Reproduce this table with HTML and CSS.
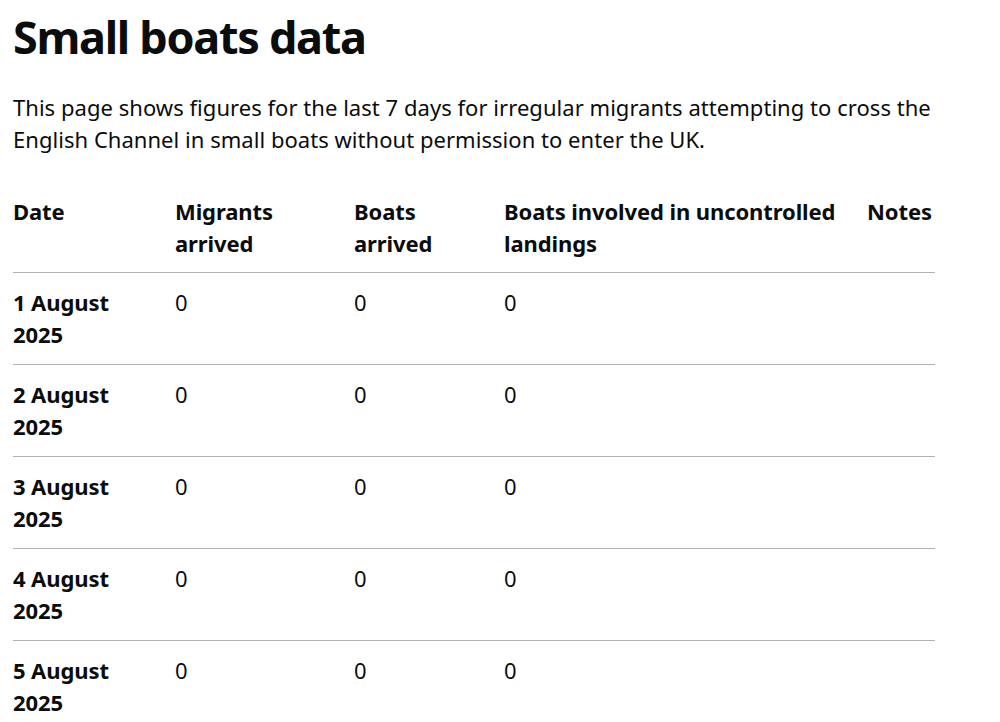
FILE: index.html
```html
<!DOCTYPE html>
<html lang="en">
<head>
<meta charset="utf-8">
<title>Small boats data</title>
<link rel="stylesheet" href="styles.css">
</head>
<body>
<main class="page">
  <h1 class="title">Small boats data</h1>
  <p class="lead">This page shows figures for the last 7 days for irregular migrants attempting to cross the English Channel in small boats without permission to enter the UK.</p>
  <table class="data">
    <colgroup>
      <col class="c-date"><col class="c-mig"><col class="c-boats"><col class="c-unc"><col class="c-notes">
    </colgroup>
    <thead>
      <tr><th>Date</th><th>Migrants arrived</th><th>Boats arrived</th><th>Boats involved in uncontrolled landings</th><th>Notes</th></tr>
    </thead>
    <tbody>
      <tr><th>1 August 2025</th><td>0</td><td>0</td><td>0</td><td></td></tr>
      <tr><th>2 August 2025</th><td>0</td><td>0</td><td>0</td><td></td></tr>
      <tr><th>3 August 2025</th><td>0</td><td>0</td><td>0</td><td></td></tr>
      <tr><th>4 August 2025</th><td>0</td><td>0</td><td>0</td><td></td></tr>
      <tr><th>5 August 2025</th><td>0</td><td>0</td><td>0</td><td></td></tr>
      <tr><th>6 August 2025</th><td>0</td><td>0</td><td>0</td><td></td></tr>
      <tr><th>7 August 2025</th><td>0</td><td>0</td><td>0</td><td></td></tr>
    </tbody>
  </table>
</main>
</body>
</html>
```

FILE: styles.css
```css
html, body {
  margin: 0;
  padding: 0;
  background: #ffffff;
}
body {
  font-family: "Noto Sans", "Liberation Sans", sans-serif;
  color: #0b0c0c;
}
.page {
  padding: 0 13px;
}
.title {
  margin: 0;
  padding-top: 9px;
  font-size: 45px;
  line-height: 56px;
  font-weight: 700;
  letter-spacing: -1.3px;
}
.lead {
  margin: 26px 0 0;
  font-size: 22px;
  line-height: 32px;
  max-width: 960px;
  letter-spacing: 0.04px;
}
.data {
  margin-top: 40px;
  border-collapse: collapse;
  table-layout: fixed;
  width: 922px;
  font-size: 22px;
  line-height: 32px;
  letter-spacing: -0.1px;
}
.c-date { width: 162px; }
.c-mig { width: 179px; }
.c-boats { width: 150px; }
.c-unc { width: 363px; }
.c-notes { width: 68px; }
.data th, .data td {
  text-align: left;
  vertical-align: top;
  padding: 13px 20px 14px 0;
  border-bottom: 1px solid #b1b4b6;
}
.data th {
  font-weight: 700;
}
.data td {
  font-weight: 400;
}
.data thead th {
  padding-top: 0;
  padding-bottom: 13px;
}
.data tr > :last-child {
  padding-right: 0;
}
```
